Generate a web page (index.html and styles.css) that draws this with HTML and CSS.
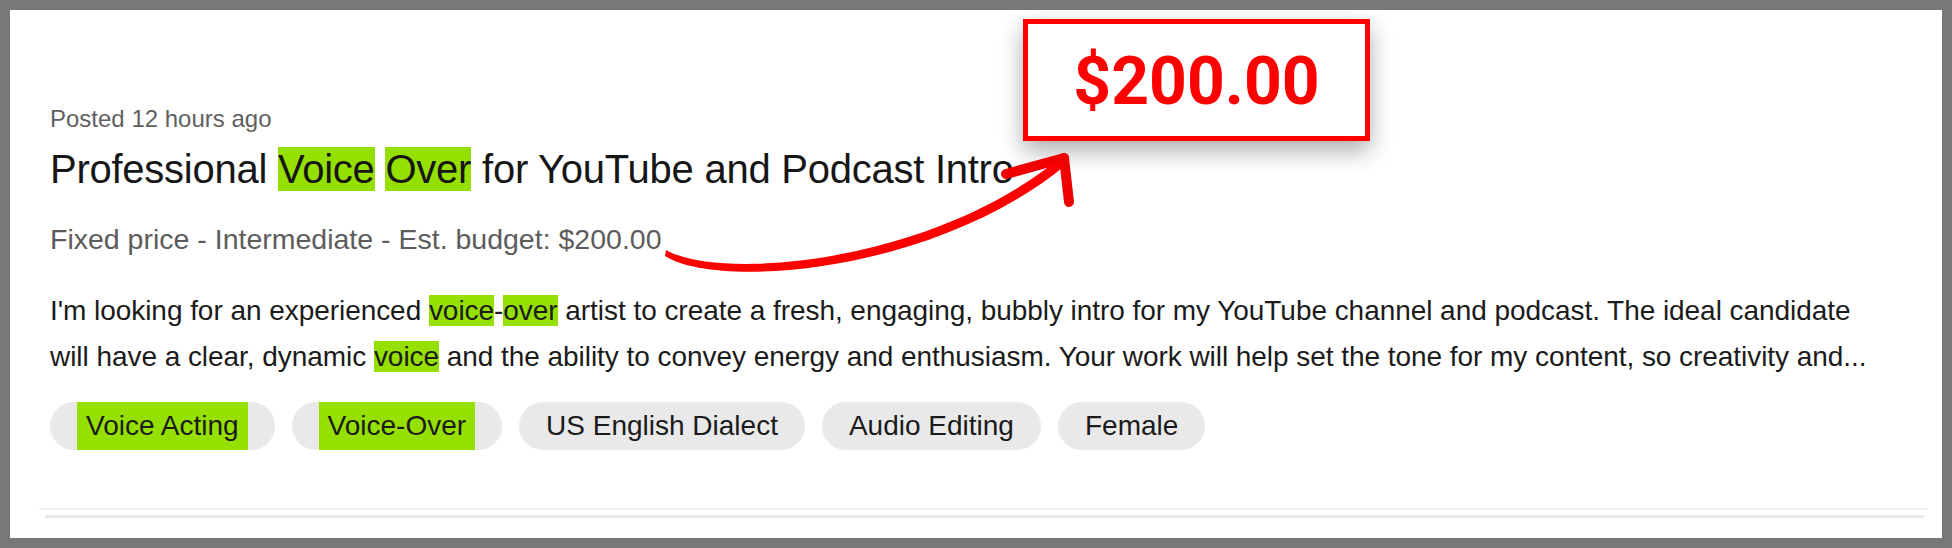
FILE: index.html
```html
<!DOCTYPE html>
<html lang="en">
<head>
<meta charset="utf-8">
<title>Job post</title>
<link rel="stylesheet" href="styles.css">
</head>
<body>
<div class="frame">
  <section class="job">
    <p class="posted">Posted 12 hours ago</p>
    <h2 class="title">Professional <mark>Voice</mark> <mark>Over</mark> for YouTube and Podcast Intro</h2>
    <p class="meta">Fixed price - Intermediate - Est. budget: $200.00</p>
    <p class="desc">
      <span class="desc-line">I'm looking for an experienced <mark>voice</mark>-<mark>over</mark> artist to create a fresh, engaging, bubbly intro for my YouTube channel and podcast. The ideal candidate</span>
      <span class="desc-line">will have a clear, dynamic <mark>voice</mark> and the ability to convey energy and enthusiasm. Your work will help set the tone for my content, so creativity and...</span>
    </p>
    <ul class="tags">
      <li class="tag"><mark>Voice Acting</mark></li>
      <li class="tag"><mark>Voice-Over</mark></li>
      <li class="tag">US English Dialect</li>
      <li class="tag">Audio Editing</li>
      <li class="tag">Female</li>
    </ul>
  </section>
  <div class="divider"></div>
  <div class="divider second"></div>

  <div class="price-callout">$200.00</div>
  <svg class="arrow" viewBox="0 0 1952 548" width="1952" height="548" aria-hidden="true">
    <path d="M666,250 C 722,282 935,262 1061,157 L 1067,164 C 937,273 718,290 665,256 Z" fill="#ff0000"/>
    <path d="M1006,174 L1064,158" stroke="#f00000" stroke-width="10" stroke-linecap="round" fill="none"/>
    <path d="M1064,158 L1069,202" stroke="#f20000" stroke-width="10" stroke-linecap="round" fill="none"/>
  </svg>
</div>
</body>
</html>
```

FILE: styles.css
```css
* { box-sizing: border-box; }

html, body {
  margin: 0;
  padding: 0;
  background: #787878;
}

body {
  width: 1952px;
  height: 548px;
  padding: 10px;
  font-family: "Liberation Sans", Arial, Helvetica, sans-serif;
  color: #1b1b1b;
}

.frame {
  position: relative;
  width: 1932px;
  height: 528px;
  background: #ffffff;
  overflow: hidden;
}

.job {
  padding: 93px 0 0 40px;
}

.posted {
  margin: 0;
  font-size: 24px;
  line-height: 32px;
  color: #5f5f5f;
}

.title {
  margin: 10px 0 0;
  font-size: 40px;
  line-height: 48px;
  font-weight: 400;
  letter-spacing: -0.25px;
  color: #161616;
}

.meta {
  margin: 28px 0 0;
  font-size: 28.5px;
  line-height: 36px;
  color: #5c5c5c;
}

.desc {
  margin: 31px 0 0;
  width: 1860px;
  font-size: 28px;
  line-height: 46px;
  letter-spacing: -0.05px;
  color: #1b1b1b;
}

.desc-line {
  display: block;
  white-space: nowrap;
}

mark {
  background: #95e000;
  color: inherit;
}

.tags {
  list-style: none;
  margin: 22px 0 0;
  padding: 0;
  display: flex;
  gap: 17px;
}

.tag {
  display: flex;
  align-items: center;
  height: 48px;
  padding: 0 27px;
  border-radius: 24px;
  background: #e9e9e9;
  font-size: 28px;
  color: #1b1b1b;
}

.tag mark {
  display: flex;
  align-items: center;
  height: 48px;
  margin: 0;
  padding: 0 9px;
}

.divider {
  margin: 58px 0 0 29px;
  width: 1889px;
  height: 2px;
  background: #efefef;
}

.divider.second {
  margin: 5px 0 0 35px;
  width: 1879px;
  height: 3px;
  background: #e8e8e8;
}

.price-callout {
  position: absolute;
  left: 1013px;
  top: 9px;
  width: 347px;
  height: 122px;
  border: 5px solid #ff0000;
  background: #ffffff;
  box-shadow: 0 10px 22px rgba(0, 0, 0, 0.32);
  display: flex;
  align-items: center;
  justify-content: center;
  font-family: Roboto, "Liberation Sans", sans-serif;
  font-weight: 700;
  font-size: 66px;
  color: #ff0000;
  padding-top: 2px;
}

.arrow {
  position: absolute;
  left: -10px;
  top: -10px;
  pointer-events: none;
}
```
